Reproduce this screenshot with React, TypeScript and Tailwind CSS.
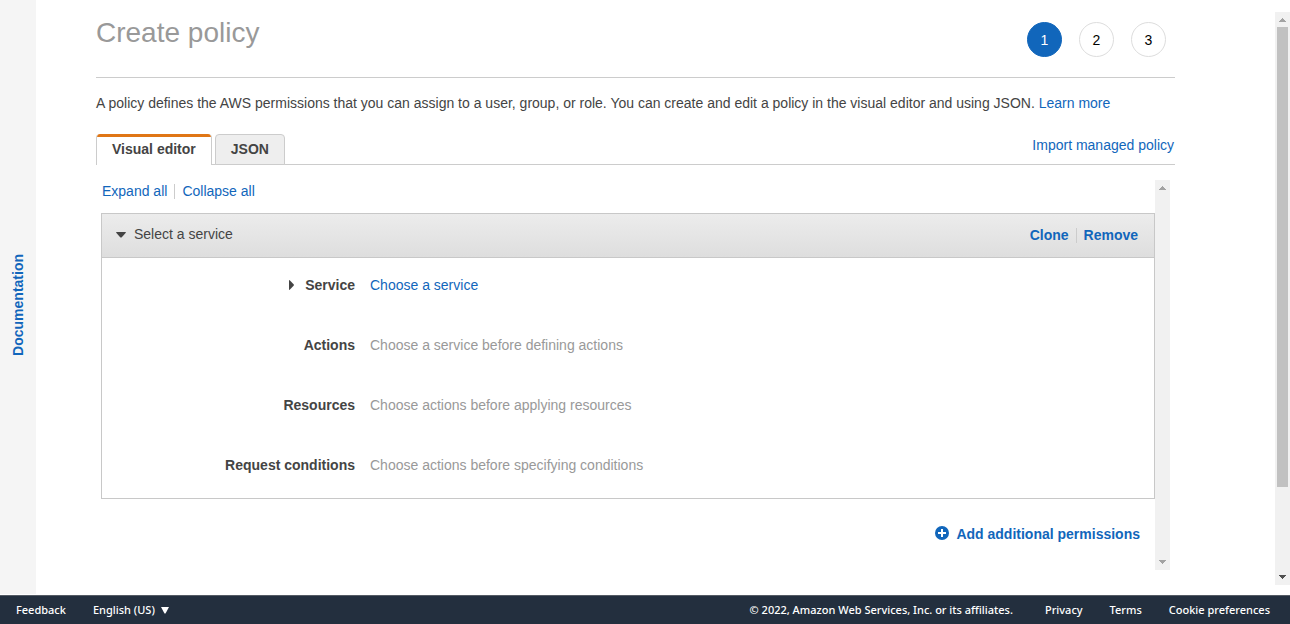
import type { ReactNode } from "react";

const steps = [1, 2, 3];

const rows = [
  { label: "Actions", hint: "Choose a service before defining actions" },
  { label: "Resources", hint: "Choose actions before applying resources" },
  { label: "Request conditions", hint: "Choose actions before specifying conditions" },
];

const arrowPaths = {
  up: "M0 4h7v-1h-1v-1h-1v-1h-1v-1h-1v1h-1v1h-1v1h-1z",
  down: "M0 0h7v1h-1v1h-1v1h-1v1h-1v-1h-1v-1h-1v-1h-1z",
};

function ScrollArrow({ direction, className = "" }: { direction: "up" | "down"; className?: string }) {
  return (
    <svg viewBox="0 0 7 4" className={`h-1 w-[7px] ${className}`} shapeRendering="crispEdges" aria-hidden="true">
      <path d={arrowPaths[direction]} fill="currentColor" />
    </svg>
  );
}

function Separator() {
  return <span aria-hidden="true" className="h-[15px] w-px bg-[#ccc]" />;
}

function TextLink({ children }: { children: ReactNode }) {
  return (
    <a href="#" className="text-[#1166bb] hover:underline">
      {children}
    </a>
  );
}

function PermissionRow({ label, children }: { label: ReactNode; children: ReactNode }) {
  return (
    <div className="flex gap-[15px] pt-[17px] pb-[23px] leading-5">
      <div className="flex w-[253px] shrink-0 items-center justify-end font-bold">{label}</div>
      <div className="text-[#999]">{children}</div>
    </div>
  );
}

function Editor() {
  return (
    <section className="mt-[15px] mr-[5px] ml-[5px] flex">
      <div className="min-w-0 flex-1 pb-[26px]">
        <div className="flex items-center gap-[7px] pt-px pl-px leading-5">
          <button type="button" className="cursor-pointer text-[#1166bb]">Expand all</button>
          <Separator />
          <button type="button" className="cursor-pointer text-[#1166bb]">Collapse all</button>
        </div>

        <div className="mt-3 border border-[#c8c8c8]">
          <div className="flex h-11 items-start justify-between border-b border-[#c8c8c8] bg-linear-to-b from-[#ececec] to-[#dedede] pt-[10px] pr-4 pl-[14px]">
            <button type="button" aria-expanded="true" className="flex cursor-pointer items-center gap-2">
              <svg viewBox="0 0 10 6" className="mt-[2px] h-[6px] w-[10px]" aria-hidden="true">
                <path d="M0 .6Q0 0 .8 0h8.400q.8 0 .8.6L5.800 5.200q-.8.7-1.600 0z" fill="#444" />
              </svg>
              Select a service
            </button>
            <div className="flex items-center gap-[7px] pt-px font-bold text-[#1166bb] [text-shadow:0_1px_0_#fff]">
              <button type="button" className="cursor-pointer">Clone</button>
              <Separator />
              <button type="button" className="cursor-pointer">Remove</button>
            </div>
          </div>

          <PermissionRow
            label={
              <span className="flex items-center gap-[11px]">
                <svg viewBox="0 0 5 10" className="h-[10px] w-[5px]" aria-hidden="true">
                  <path d="M.5 0Q0 0 0 .7v8.600q0 .7.5.7L4.600 5.700q.6-.7 0-1.400z" fill="#444" />
                </svg>
                Service
              </span>
            }
          >
            <TextLink>Choose a service</TextLink>
          </PermissionRow>
          {rows.map((row) => (
            <PermissionRow key={row.label} label={row.label}>
              {row.hint}
            </PermissionRow>
          ))}
        </div>

        <div className="mt-[25px] flex justify-end pr-[15px]">
          <button type="button" className="flex cursor-pointer items-center gap-[7px] leading-5 font-bold text-[#1166bb]">
            <svg viewBox="0 0 14 14" className="mb-[2px] size-[14px]" aria-hidden="true">
              <circle cx="7" cy="7" r="7" fill="#1166bb" />
              <path d="M6 3h2v3h3v2H8v3H6V8H3V6h3z" fill="#fff" />
            </svg>
            Add additional permissions
          </button>
        </div>
      </div>

      <div aria-hidden="true" className="flex w-[15px] shrink-0 flex-col items-center justify-between bg-[#f1f1f1] py-[6px] text-[#a3a3a3]">
        <ScrollArrow direction="up" />
        <ScrollArrow direction="down" />
      </div>
    </section>
  );
}

export default function App() {
  return (
    <div className="flex min-h-screen flex-col bg-white font-['Liberation_Sans',Arial,sans-serif] text-[14px] leading-5 text-[#444]">
      <div className="flex flex-1">
        <aside className="mb-px flex w-9 shrink-0 items-center justify-center bg-[#f5f5f5] pt-4">
          <a href="#" className="rotate-180 font-bold text-[#1166bb] [writing-mode:vertical-rl]">
            Documentation
          </a>
        </aside>

        <main className="min-w-0 flex-1 pr-[100px] pl-[60px]">
          <header className="flex items-start justify-between border-b border-[#ccc] pt-[17px] pb-5">
            <h1 className="text-[28px] leading-8 text-[#999]">Create policy</h1>
            <ol className="mt-[5px] mr-[9px] flex gap-[17px]">
              {steps.map((step) => (
                <li
                  key={step}
                  className={`flex size-[35px] items-center justify-center rounded-full border ${
                    step === 1 ? "border-[#1166bb] bg-[#1166bb] text-white" : "border-[#ddd] text-black"
                  }`}
                >
                  {step}
                </li>
              ))}
            </ol>
          </header>

          <p className="mt-[15px]">
            A policy defines the AWS permissions that you can assign to a user, group, or role. You can create and edit a
            policy in the visual editor and using JSON. <TextLink>Learn more</TextLink>
          </p>

          <div className="mt-[21px] flex items-start justify-between border-b border-[#ccc]">
            <div role="tablist" className="-mb-px flex gap-[3px] font-bold">
              <button
                type="button"
                role="tab"
                aria-selected="true"
                className="flex h-[31px] cursor-pointer flex-col overflow-hidden rounded-t-[4px] border-x border-[#ccc] bg-white"
              >
                <span className="h-[3px] w-full bg-[#e07615]" />
                <span className="px-[15px] pt-[2px]">Visual editor</span>
              </button>
              <button
                type="button"
                role="tab"
                aria-selected="false"
                className="h-[31px] cursor-pointer rounded-t-[4px] border border-[#ccc] bg-[#eee] px-[15px] pb-[2px]"
              >
                JSON
              </button>
            </div>
            <button type="button" className="cursor-pointer pt-px pr-px text-[#1166bb]">Import managed policy</button>
          </div>

          <Editor />
        </main>

        <div aria-hidden="true" className="mt-3 mb-[10px] flex w-[15px] shrink-0 flex-col items-center bg-[#f1f1f1] py-[6px]">
          <ScrollArrow direction="up" className="text-[#a3a3a3]" />
          <div className="mt-[5px] flex w-[11px] flex-1 flex-col">
            <div className="h-[84%] bg-[#c1c1c1]" />
          </div>
          <ScrollArrow direction="down" className="text-[#505050]" />
        </div>
      </div>

      <footer className="flex h-[29px] items-center justify-between border-t border-[#545b64] bg-[#232f3e] pr-5 pl-4 font-['Noto_Sans',sans-serif] text-[11px] font-medium text-white">
        <div className="flex gap-[27px]">
          <a href="#">Feedback</a>
          <button type="button" className="flex cursor-pointer items-center gap-[6px]">
            English (US)
            <svg viewBox="0 0 8 7" className="h-[7px] w-2" aria-hidden="true">
              <path d="M0 0h8L4.500 6.500h-1z" fill="#fff" />
            </svg>
          </button>
        </div>
        <div className="flex">
          <span className="mr-8">© 2022, Amazon Web Services, Inc. or its affiliates.</span>
          <nav className="flex gap-[27px]">
            <a href="#">Privacy</a>
            <a href="#">Terms</a>
            <a href="#">Cookie preferences</a>
          </nav>
        </div>
      </footer>
    </div>
  );
}
